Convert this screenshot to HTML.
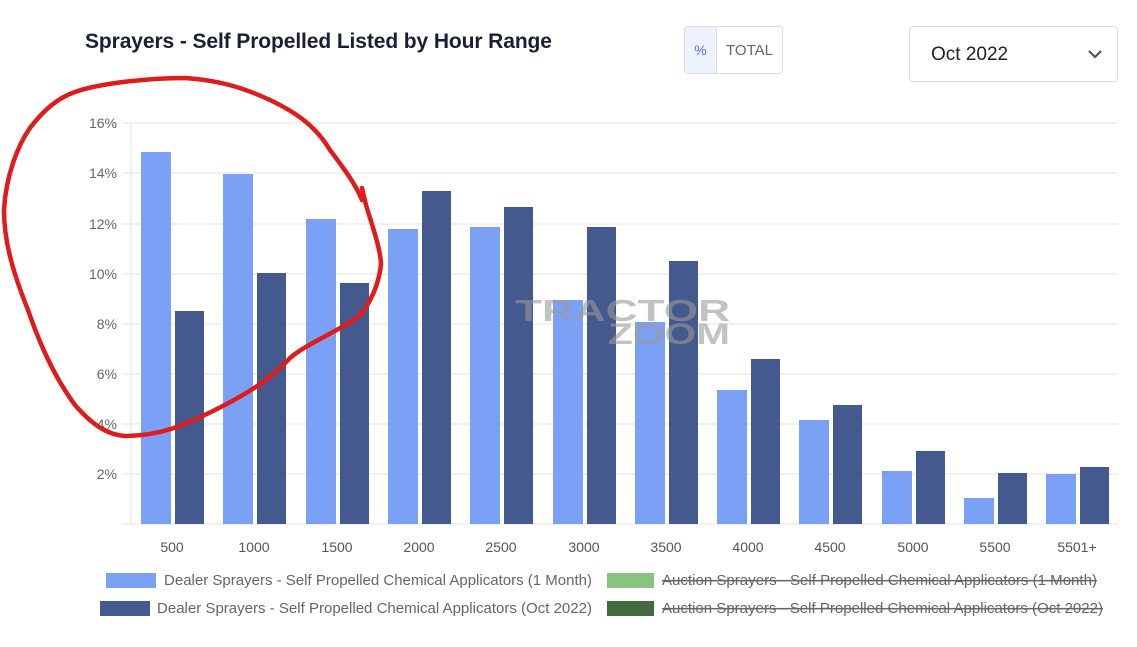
<!DOCTYPE html>
<html><head><meta charset="utf-8"><style>
body{margin:0;width:1137px;height:647px;background:#fff;overflow:hidden;font-family:"Liberation Sans",sans-serif;position:relative}
.title{position:absolute;left:85px;top:30px;font-size:21px;font-weight:bold;color:#1a1f36;letter-spacing:-0.1px}
.tog{position:absolute;left:684px;top:26px;width:99px;height:48px;border:1px solid #ddd;border-radius:4px;box-sizing:border-box;display:flex;overflow:hidden}
.tog .p{width:31px;background:#eef2ff;color:#5a6fe0;border-right:1px solid #ddd;font-size:14px;display:flex;align-items:center;justify-content:center}
.tog .t{flex:1;color:#666;font-size:15px;display:flex;align-items:center;justify-content:center}
.sel{position:absolute;left:909px;top:26px;width:209px;height:56px;border:1px solid #ddd;border-radius:4px;box-sizing:border-box}
.sel span{position:absolute;left:21px;top:17px;font-size:19px;color:#222}
</style></head><body>
<div class="title">Sprayers - Self Propelled Listed by Hour Range</div>
<div class="tog"><div class="p">%</div><div class="t">TOTAL</div></div>
<div class="sel"><span>Oct 2022</span><svg style="position:absolute;left:177px;top:22px" width="16" height="10"><path d="M2 2 L8 8 L14 2" fill="none" stroke="#555" stroke-width="2.2"/></svg></div>
<svg width="1137" height="647" style="position:absolute;left:0;top:0" font-family="Liberation Sans, sans-serif">
<g stroke="#e3e3e3" stroke-width="1">
<line x1="122" y1="123" x2="1118" y2="123"/><line x1="122" y1="173" x2="1118" y2="173"/><line x1="122" y1="224" x2="1118" y2="224"/><line x1="122" y1="274" x2="1118" y2="274"/><line x1="122" y1="324" x2="1118" y2="324"/><line x1="122" y1="374" x2="1118" y2="374"/><line x1="122" y1="424" x2="1118" y2="424"/><line x1="122" y1="474" x2="1118" y2="474"/><line x1="122" y1="524" x2="1118" y2="524"/><line x1="131" y1="123" x2="131" y2="524"/>
</g>
<g fill="#666" font-size="14" text-anchor="end">
<text x="117" y="128">16%</text><text x="117" y="178">14%</text><text x="117" y="229">12%</text><text x="117" y="279">10%</text><text x="117" y="329">8%</text><text x="117" y="379">6%</text><text x="117" y="429">4%</text><text x="117" y="479">2%</text>
</g>
<g fill="#7ba1f7">
<rect x="141" y="152" width="30" height="372"/><rect x="223" y="174" width="30" height="350"/><rect x="306" y="219" width="30" height="305"/><rect x="388" y="229" width="30" height="295"/><rect x="470" y="227" width="30" height="297"/><rect x="553" y="300" width="30" height="224"/><rect x="635" y="322" width="30" height="202"/><rect x="717" y="390" width="30" height="134"/><rect x="799" y="420" width="30" height="104"/><rect x="882" y="471" width="30" height="53"/><rect x="964" y="498" width="30" height="26"/><rect x="1046" y="474" width="30" height="50"/>
</g>
<g fill="#44598e">
<rect x="175" y="311" width="29" height="213"/><rect x="257" y="273" width="29" height="251"/><rect x="340" y="283" width="29" height="241"/><rect x="422" y="191" width="29" height="333"/><rect x="504" y="207" width="29" height="317"/><rect x="587" y="227" width="29" height="297"/><rect x="669" y="261" width="29" height="263"/><rect x="751" y="359" width="29" height="165"/><rect x="833" y="405" width="29" height="119"/><rect x="916" y="451" width="29" height="73"/><rect x="998" y="473" width="29" height="51"/><rect x="1080" y="467" width="29" height="57"/>
</g>
<g fill="#999" fill-opacity="0.6" font-weight="bold">
<text x="515" y="321" font-size="31" textLength="215" lengthAdjust="spacingAndGlyphs">TRACTOR</text>
<text x="608" y="344" font-size="30" textLength="122" lengthAdjust="spacingAndGlyphs">ZOOM</text>
</g>
<g fill="#555" font-size="14" text-anchor="middle">
<text x="172" y="552">500</text><text x="254" y="552">1000</text><text x="337" y="552">1500</text><text x="419" y="552">2000</text><text x="501" y="552">2500</text><text x="584" y="552">3000</text><text x="666" y="552">3500</text><text x="748" y="552">4000</text><text x="830" y="552">4500</text><text x="913" y="552">5000</text><text x="995" y="552">5500</text><text x="1077" y="552">5501+</text>
</g>
<rect x="106" y="573" width="50" height="15" fill="#7ba1f7"/>
<rect x="100" y="601" width="50" height="15" fill="#44598e"/>
<rect x="607" y="573" width="47" height="15" fill="#88c47f"/>
<rect x="607" y="601" width="47" height="15" fill="#416b3c"/>
<g fill="#666" font-size="15">
<text x="164" y="585" textLength="428" lengthAdjust="spacingAndGlyphs">Dealer Sprayers - Self Propelled Chemical Applicators (1 Month)</text>
<text x="157" y="613" textLength="435" lengthAdjust="spacingAndGlyphs">Dealer Sprayers - Self Propelled Chemical Applicators (Oct 2022)</text>
<text x="662" y="585" text-decoration="line-through" textLength="435" lengthAdjust="spacingAndGlyphs">Auction Sprayers - Self Propelled Chemical Applicators (1 Month)</text>
<text x="662" y="613" text-decoration="line-through" textLength="441" lengthAdjust="spacingAndGlyphs">Auction Sprayers - Self Propelled Chemical Applicators (Oct 2022)</text>
</g>
<path d="M362 188 L366 205 C372 225 381 250 381 265 C378 290 365 315 350 322 C330 335 305 345 290 358 C270 380 245 395 215 410 C185 425 160 436 125 436 C110 435 95 428 75 405 C55 378 40 345 28 310 C12 270 4 240 4 210 C6 175 18 145 30 128 C45 108 60 97 75 92 C100 83 150 78 185 78 C215 80 240 86 270 100 C295 112 315 125 330 150 C345 170 356 185 362 200" fill="none" stroke="#e01b1b" stroke-width="4.5" stroke-linecap="round"/>
</svg>
</body></html>
